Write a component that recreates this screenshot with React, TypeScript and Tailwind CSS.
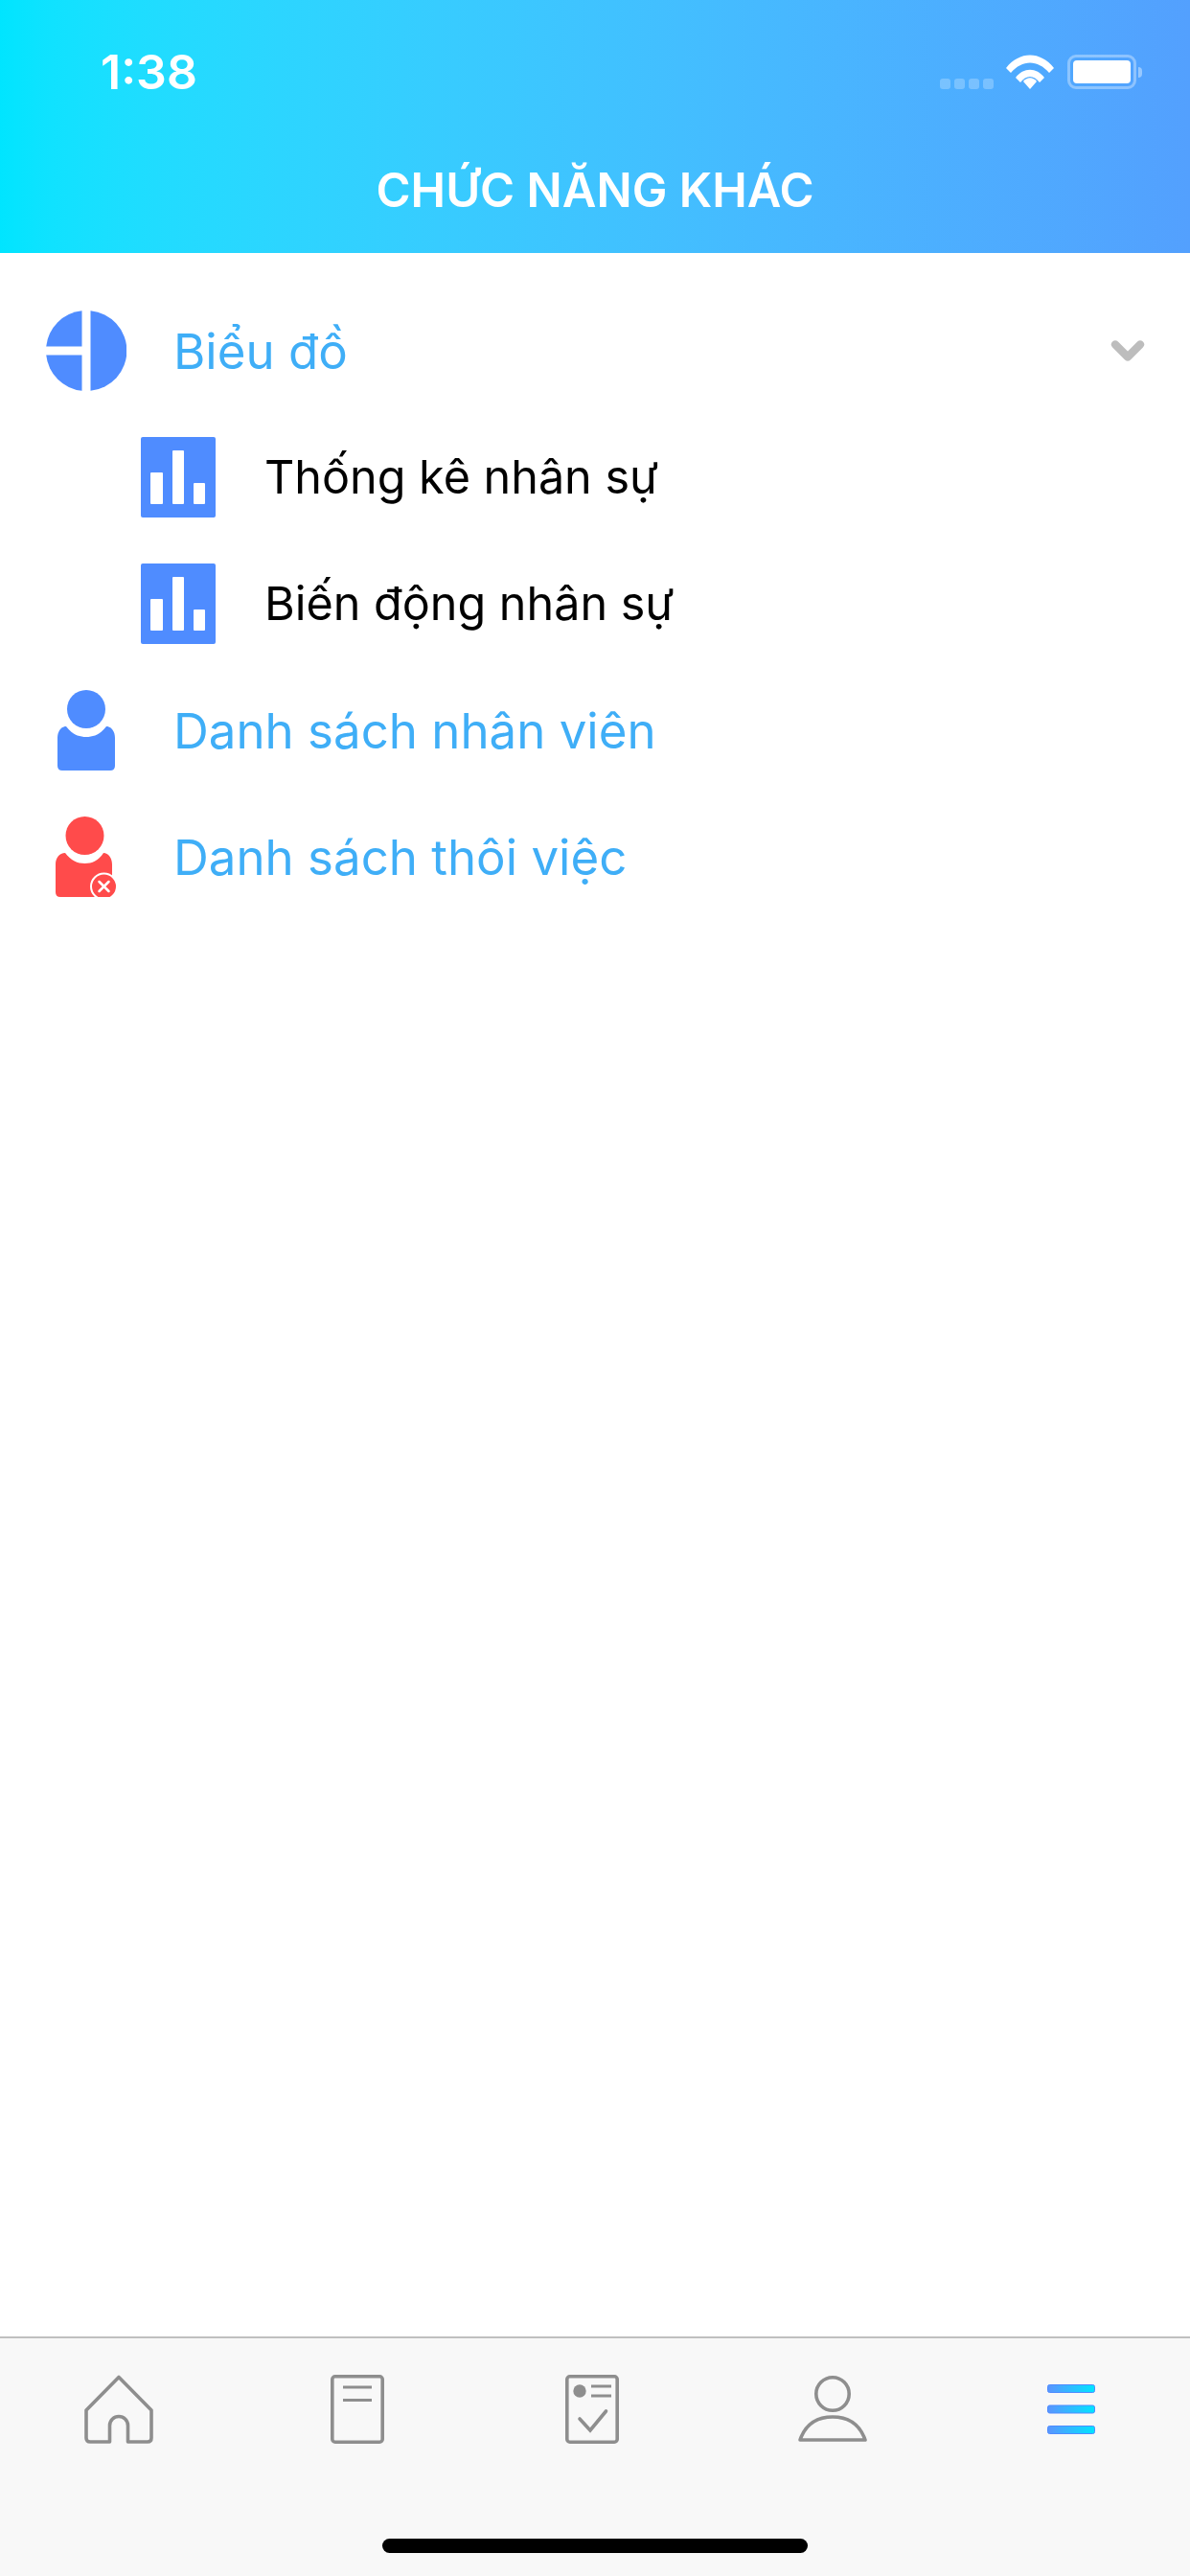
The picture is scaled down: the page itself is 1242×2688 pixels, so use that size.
import React from 'react';
import { ChevronDown } from 'lucide-react';

const BLUE = '#4F8CFF';
const font = { fontFamily: 'Inter, "Noto Sans", sans-serif' };

const PieIcon = () => (
  <svg width="84" height="84" viewBox="0 0 84 84">
    <path d="M37.5 0.2 V37.5 H0.2 A42 42 0 0 1 37.5 0.2 Z" fill={BLUE} />
    <path d="M37.5 46.5 V83.8 A42 42 0 0 1 0.2 46.5 Z" fill={BLUE} />
    <path d="M46.5 0.2 A42 42 0 0 1 46.5 83.8 Z" fill={BLUE} />
  </svg>
);

const ChartTile = () => (
  <svg width="78" height="84" viewBox="0 0 78 84" className="shrink-0">
    <rect width="78" height="84" rx="2" fill={BLUE} />
    <rect x="10" y="37" width="13" height="33" rx="1" fill="#fff" />
    <rect x="33" y="14" width="12" height="56" rx="1" fill="#fff" />
    <rect x="55" y="48" width="12" height="22" rx="1" fill="#fff" />
  </svg>
);

const PersonIcon = () => (
  <svg width="84" height="84" viewBox="0 0 84 84">
    <circle cx="42" cy="20" r="20" fill={BLUE} />
    <path d="M21 38 C27 46 34 49 42 49 C50 49 57 46 63 38 C68 38 72 43 72 50 V79 Q72 84 67 84 H17 Q12 84 12 79 V50 C12 43 16 38 21 38 Z" fill={BLUE} />
  </svg>
);

const PersonRemoveIcon = () => (
  <svg width="84" height="84" viewBox="0 0 84 84">
    <circle cx="40.5" cy="20" r="20" fill="#FF4B4B" />
    <path d="M20 38 C26 46 33 49 40.5 49 C48 49 55 46 60 38 C65 38 69 43 69 50 V79 Q69 84 64 84 H15 Q10 84 10 79 V50 C10 43 14 38 20 38 Z" fill="#FF4B4B" />
    <circle cx="60.5" cy="73" r="13.5" fill="#FF4B4B" stroke="#fff" strokeWidth="2" />
    <path d="M55.5 68 L65.5 78 M65.5 68 L55.5 78" stroke="#fff" strokeWidth="2.5" strokeLinecap="round" />
  </svg>
);

const WifiIcon = () => (
  <svg width="50" height="36" viewBox="0 0 50 36" fill="#fff">
    <path d="M0 14 C14 -4 36 -4 50 14 L45 19 C33 5 17 5 5 19 Z" />
    <path d="M10 24 C18 13 32 13 40 24 L35 29 C29 21 21 21 15 29 Z" />
    <path d="M18 28 C22 23 28 23 32 28 L25 36 Z" />
  </svg>
);

const HomeIcon = () => (
  <svg width="72" height="72" viewBox="0 0 72 72" fill="none" stroke="#8E8E8E" strokeWidth="3.6" strokeLinejoin="round">
    <path d="M36 2.5 L70 37 V66 Q70 70 66 70 H45.5 V53 A9.5 9.5 0 0 0 26.5 53 V70 H6 Q2 70 2 66 V37 Z" />
  </svg>
);

const DocIcon = () => (
  <svg width="56" height="72" viewBox="0 0 56 72" fill="none" stroke="#8E8E8E" strokeWidth="3.6">
    <rect x="1.8" y="1.8" width="52.4" height="68.4" rx="3" />
    <path d="M13 13 H43 M13 26.5 H43" strokeWidth="3" />
  </svg>
);

const CheckDocIcon = () => (
  <svg width="56" height="72" viewBox="0 0 56 72" fill="none" stroke="#8E8E8E" strokeWidth="3.6">
    <rect x="1.8" y="1.8" width="52.4" height="68.4" rx="3" />
    <ellipse cx="15" cy="17" rx="6.7" ry="6.7" fill="#8E8E8E" stroke="none" />
    <path d="M27 12 H48 M27 22 H48" strokeWidth="3" />
    <path d="M15 46 L26 58 L42.5 38" strokeLinecap="round" />
  </svg>
);

const UserIcon = () => (
  <svg width="72" height="70" viewBox="0 0 72 70" fill="none" stroke="#8E8E8E" strokeWidth="3.6" strokeLinejoin="round">
    <circle cx="36" cy="19" r="17.2" />
    <path d="M2 67 C8 50 20 43 36 43 C52 43 64 50 70 67 Z" />
  </svg>
);

const MenuIcon = () => (
  <svg width="50" height="52" viewBox="0 0 50 52">
    <defs>
      <linearGradient id="menu-bar" x1="0" x2="1" y1="0" y2="0">
        <stop offset="0" stopColor="#5B94FF" />
        <stop offset="1" stopColor="#00E5FF" />
      </linearGradient>
    </defs>
    <rect x="0.5" y="0.5" width="49" height="8" rx="2" fill="url(#menu-bar)" stroke="#4F8CFF" strokeWidth="1" />
    <rect x="0.5" y="22" width="49" height="8" rx="2" fill="url(#menu-bar)" stroke="#4F8CFF" strokeWidth="1" />
    <rect x="0.5" y="43.5" width="49" height="8" rx="2" fill="url(#menu-bar)" stroke="#4F8CFF" strokeWidth="1" />
  </svg>
);

const MenuRow = ({ icon, label, children }: { icon: React.ReactNode; label: string; children?: React.ReactNode }) => (
  <div className="flex h-[132px] items-center gap-[49px] pl-[48px] pr-[39px]">
    {icon}
    <span className="flex-1 text-[51px] leading-none text-[#3FAEF7]">{label}</span>
    {children}
  </div>
);

const SubRow = ({ label }: { label: string }) => (
  <div className="flex h-[132px] items-center gap-[51px] pl-[147px]">
    <ChartTile />
    <span className="text-[48.5px] leading-none text-black">{label}</span>
  </div>
);

export default function App() {
  return (
    <div className="flex h-[2688px] w-[1242px] flex-col overflow-hidden bg-white" style={font}>
      <header className="h-[264px] bg-gradient-to-r from-[#00E5FF] to-[#53A0FE] text-white">
        <div className="flex h-[150px] items-center justify-between pl-[105px] pr-[50px]">
          <span className="text-[50px] font-semibold leading-none">1:38</span>
          <div className="flex items-start">
            <div className="mr-[13px] mt-[25px] flex gap-[4px]">
              {[0, 1, 2, 3].map((i) => (
                <span key={i} className="h-[11px] w-[11px] rounded-[3px] bg-white/25" />
              ))}
            </div>
            <WifiIcon />
            <div className="ml-[14px] flex items-center">
              <div className="h-[36px] w-[72px] rounded-[9px] border-[3px] border-white/35 p-[3px]">
                <div className="h-full w-full rounded-[4px] bg-white" />
              </div>
              <span className="ml-[2px] h-[11px] w-[4px] rounded-r-full bg-white/40" />
            </div>
          </div>
        </div>
        <h1 className="pt-[19px] text-center text-[49px] font-semibold leading-[60px]">CHỨC NĂNG KHÁC</h1>
      </header>

      <main className="flex-1 pt-[36px]">
        <MenuRow icon={<PieIcon />} label="Biểu đồ">
          <ChevronDown size={52} strokeWidth={3.8} className="text-[#BDBDBD]" />
        </MenuRow>
        <SubRow label="Thống kê nhân sự" />
        <SubRow label="Biến động nhân sự" />
        <MenuRow icon={<PersonIcon />} label="Danh sách nhân viên" />
        <MenuRow icon={<PersonRemoveIcon />} label="Danh sách thôi việc" />
      </main>

      <nav className="relative h-[250px] border-t-2 border-[#BFBFBF] bg-[#F8F8F8]">
        <div className="grid h-[110px] grid-cols-5 items-center pt-[38px]">
          <div className="flex justify-center"><HomeIcon /></div>
          <div className="flex justify-center"><DocIcon /></div>
          <div className="flex justify-center pr-[5px]"><CheckDocIcon /></div>
          <div className="flex justify-center"><UserIcon /></div>
          <div className="flex justify-center"><MenuIcon /></div>
        </div>
        <div className="absolute bottom-[24px] left-[399px] h-[15px] w-[444px] rounded-full bg-black" />
      </nav>
    </div>
  );
}
